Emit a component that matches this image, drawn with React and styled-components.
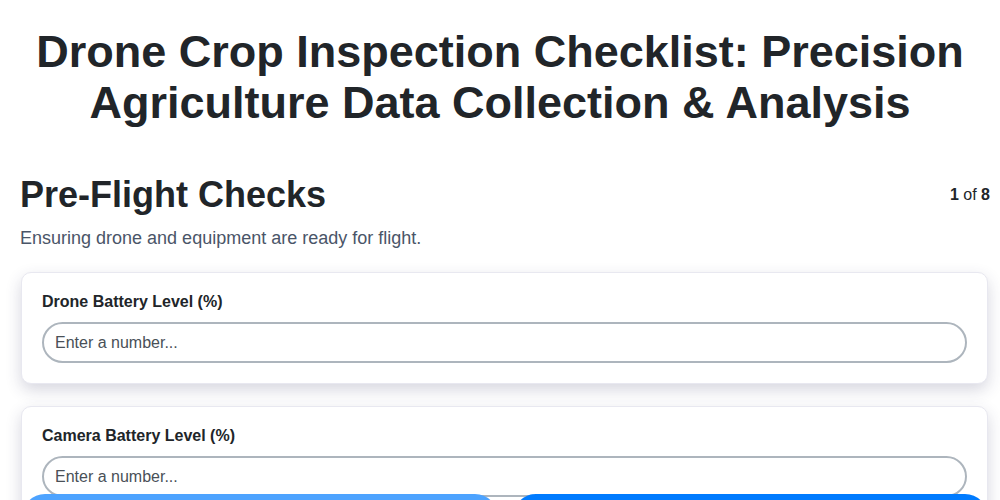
import styled, { createGlobalStyle } from "styled-components";

const GlobalStyle = createGlobalStyle`
  * {
    box-sizing: border-box;
  }
  body {
    margin: 0;
    background: #ffffff;
    font-family: "Liberation Sans", Arial, sans-serif;
    color: #212529;
  }
`;

const fields = [
  { label: "Drone Battery Level (%)" },
  { label: "Camera Battery Level (%)" },
  { label: "Propeller Condition" },
];

const App = () => {
  return (
    <>
      <GlobalStyle />
      <Page>
        <Title>
          Drone Crop Inspection Checklist: Precision Agriculture Data Collection
          &amp; Analysis
        </Title>
        <StepHeader>
          <StepTitle>Pre-Flight Checks</StepTitle>
          <StepCount>
            <b>1</b> of <b>8</b>
          </StepCount>
        </StepHeader>
        <StepDescription>
          Ensuring drone and equipment are ready for flight.
        </StepDescription>
        <FieldList>
          {fields.map((field) => (
            <Card key={field.label}>
              <Label>{field.label}</Label>
              <Input type="text" placeholder="Enter a number..." />
            </Card>
          ))}
        </FieldList>
      </Page>
      <NavBar>
        <NavButton $light>Previous</NavButton>
        <NavButton>Next</NavButton>
      </NavBar>
    </>
  );
};

export default App;

const Page = styled.div`
  padding: 26px 20px 80px;
`;

const Title = styled.h1`
  margin: 0 0 45px;
  font-size: 45px;
  line-height: 51px;
  font-weight: 700;
  text-align: center;
  color: #212529;
`;

const StepHeader = styled.div`
  display: flex;
  justify-content: space-between;
  align-items: center;
  margin-right: -10px;
`;

const StepTitle = styled.h2`
  margin: 0;
  font-size: 36px;
  line-height: 43px;
  font-weight: 700;
  color: #212529;
`;

const StepCount = styled.span`
  font-size: 16px;
  color: #212529;
`;

const StepDescription = styled.p`
  margin: 9px 0 20px;
  font-size: 18px;
  line-height: 27px;
  color: #4a5568;
`;

const FieldList = styled.div`
  display: flex;
  flex-direction: column;
  gap: 22px;
  margin: 0 -8px 0 1px;
`;

const Card = styled.div`
  background: #ffffff;
  border: 1px solid #e8e8f0;
  border-radius: 10px;
  padding: 20px;
  box-shadow: 0 6px 16px rgba(50, 50, 93, 0.2);
  display: flex;
  flex-direction: column;
  gap: 11px;
`;

const Label = styled.label`
  font-size: 16px;
  line-height: 18px;
  font-weight: 700;
  color: #212529;
`;

const Input = styled.input`
  width: 100%;
  height: 41px;
  border: 2px solid #adb5bd;
  border-radius: 21px;
  padding: 0 11px;
  font-family: "Liberation Sans", Arial, sans-serif;
  font-size: 16px;
  color: #212529;
  background: #ffffff;
  outline: none;

  &::placeholder {
    color: #495057;
  }
`;

const NavBar = styled.div`
  position: fixed;
  left: 22px;
  right: 12px;
  bottom: -40px;
  display: flex;
  gap: 15px;
`;

const NavButton = styled.button`
  flex: 1;
  height: 46px;
  border: none;
  border-radius: 23px;
  background: ${(p) => (p.$light ? "#4da3ff" : "#007bff")};
  color: #ffffff;
  font-family: "Liberation Sans", Arial, sans-serif;
  font-size: 16px;
  font-weight: 700;
  padding-top: 26px;
`;
